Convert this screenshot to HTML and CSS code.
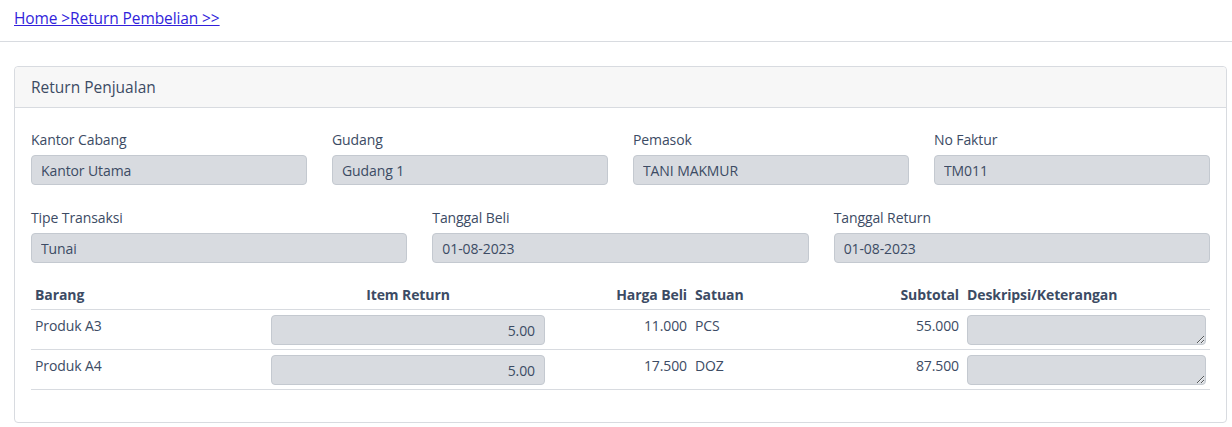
FILE: index.html
```html
<!DOCTYPE html>
<html lang="id">
<head>
<meta charset="utf-8">
<title>Return Pembelian</title>
<link rel="stylesheet" href="styles.css">
</head>
<body>
<nav class="crumbs"><a href="#">Home &gt;Return Pembelian &gt;&gt;</a></nav>
<main class="main">
  <section class="card">
    <header class="card-header">Return Penjualan</header>
    <div class="card-body">
      <div class="grid grid-4">
        <div class="field"><label>Kantor Cabang</label><input class="control" type="text" value="Kantor Utama" disabled></div>
        <div class="field"><label>Gudang</label><input class="control" type="text" value="Gudang 1" disabled></div>
        <div class="field"><label>Pemasok</label><input class="control" type="text" value="TANI MAKMUR" disabled></div>
        <div class="field"><label>No Faktur</label><input class="control" type="text" value="TM011" disabled></div>
      </div>
      <div class="grid grid-3">
        <div class="field"><label>Tipe Transaksi</label><input class="control" type="text" value="Tunai" disabled></div>
        <div class="field"><label>Tanggal Beli</label><input class="control" type="text" value="01-08-2023" disabled></div>
        <div class="field"><label>Tanggal Return</label><input class="control" type="text" value="01-08-2023" disabled></div>
      </div>
      <table class="items">
        <colgroup>
          <col class="c-barang"><col class="c-item"><col class="c-harga"><col class="c-satuan"><col class="c-sub"><col class="c-desk">
        </colgroup>
        <thead>
          <tr><th>Barang</th><th class="center">Item Return</th><th class="right">Harga Beli</th><th>Satuan</th><th class="right">Subtotal</th><th>Deskripsi/Keterangan</th></tr>
        </thead>
        <tbody>
          <tr><td>Produk A3</td><td><input class="control num" type="text" value="5.00" disabled></td><td class="right">11.000</td><td>PCS</td><td class="right">55.000</td><td><textarea class="control area" rows="1" disabled></textarea></td></tr>
          <tr><td>Produk A4</td><td><input class="control num" type="text" value="5.00" disabled></td><td class="right">17.500</td><td>DOZ</td><td class="right">87.500</td><td><textarea class="control area" rows="1" disabled></textarea></td></tr>
        </tbody>
      </table>
    </div>
  </section>
</main>
</body>
</html>
```
FILE: styles.css
```css
* { box-sizing: border-box; }
body {
  margin: 0;
  font-family: "Open Sans", "Noto Sans", sans-serif;
  font-size: 14px;
  line-height: 21px;
  color: #3c4b64;
  background: #fff;
}
.crumbs {
  height: 42px;
  padding: 6px 14px 0;
  border-bottom: 1px solid #d8dbe0;
  font-size: 15.5px;
  line-height: 24px;
  letter-spacing: -0.1px;
}
.crumbs a { color: #321fdb; text-decoration: underline; }
.main { padding: 24px 5px 5px 14px; }
.card {
  border: 1px solid #d8dbe0;
  border-radius: 4px;
  background: #fff;
}
.card-header {
  height: 41px;
  padding: 8px 16px;
  background: #f7f7f7;
  border-bottom: 1px solid #d8dbe0;
  border-radius: 4px 4px 0 0;
  font-size: 15.5px;
  line-height: 24px;
}
.card-body { padding: 21px 16px 16px; letter-spacing: -0.1px; }
.grid { display: grid; column-gap: 25px; margin-bottom: 22px; }
.grid-4 { grid-template-columns: repeat(4, 1fr); }
.grid-3 { grid-template-columns: repeat(3, 1fr); margin-bottom: 17px; }
.field label { display: block; margin-bottom: 5px; }
.control {
  display: block;
  width: 100%;
  height: 30px;
  padding: 4px 9px;
  font: inherit;
  letter-spacing: inherit;
  color: #3c4b64;
  background: #d8dbe0;
  border: 1px solid #c4c9d0;
  border-radius: 4px;
  opacity: 1;
}
.control:disabled { color: #3c4b64; -webkit-text-fill-color: #3c4b64; }
.num { text-align: right; }
.area { resize: vertical; min-height: 30px; }
.items {
  width: 100%;
  margin-bottom: 16px;
  border-collapse: collapse;
  table-layout: fixed;
}
.c-barang { width: 236px; }
.c-item { width: 282px; }
.c-harga { width: 142px; }
.c-satuan { width: 136px; }
.c-sub { width: 136px; }
.c-desk { width: 247px; }
.items th, .items td {
  padding: 4px;
  vertical-align: top;
  text-align: left;
  border-bottom: 1px solid #d8dbe0;
}
.items td { padding-top: 5px; }
.items th { font-weight: 700; }
.items .center { text-align: center; }
.items .right { text-align: right; }
```
